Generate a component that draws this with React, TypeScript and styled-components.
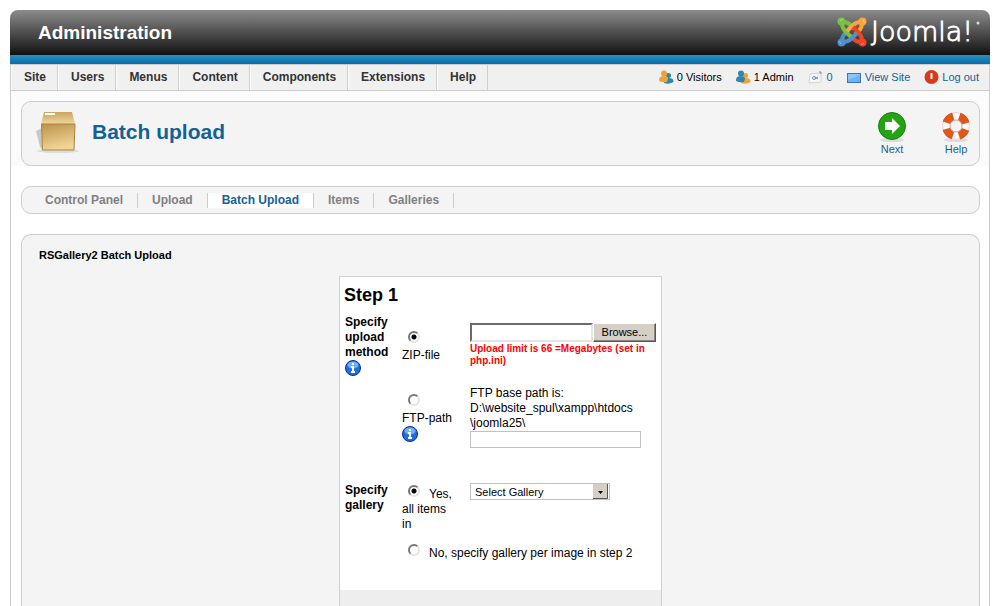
import React from 'react';
import styled, { createGlobalStyle } from 'styled-components';

const Global = createGlobalStyle`
  * { box-sizing: border-box; }
  html, body { margin: 0; padding: 0; background: #fff; }
  body, input, button, select { font-family: "Liberation Sans", Arial, sans-serif; }
  body { font-size: 12px; line-height: 15px; color: #000; }
  a { color: #146295; text-decoration: none; }
  h1, h2, h3, ul, fieldset { margin: 0; padding: 0; border: 0; }
  ul { list-style: none; }
`;

const Page = styled.div`
  padding: 10px 10px 0;
`;

const Header = styled.header`
  display: flex;
  align-items: center;
  justify-content: space-between;
  height: 45px;
  padding: 0 9px 0 28px;
  border-radius: 8px 8px 0 0;
  background: linear-gradient(#8c8c8c, #111);
`;

const SiteName = styled.h1`
  color: #fff;
  font-size: 19px;
  line-height: 24px;
`;

const Logo = styled.a`
  display: flex;
  height: 36px;
`;

const BlueStrip = styled.div`
  height: 9px;
  background: linear-gradient(#2490c8, #0a6ba3);
`;

const MenuBar = styled.div`
  display: flex;
  justify-content: space-between;
  height: 27px;
  border: 1px solid #ccc;
  background: #f0f0f0;
`;

const MenuList = styled.ul`
  display: flex;
`;

const MenuLink = styled.a`
  display: block;
  height: 25px;
  padding: 0 11px 0 12px;
  border-right: 1px solid #d0d0d0;
  border-left: 1px solid #fafafa;
  color: #333;
  font-weight: bold;
  line-height: 25px;
`;

const StatusList = styled.ul`
  display: flex;
  gap: 14px;
  padding-right: 10px;
  font-size: 11px;
  line-height: 25px;
`;

const StatusItem = styled.li`
  display: flex;
  align-items: center;
  gap: 3px;
`;

const Body = styled.main`
  padding: 0 9px 0 10px;
  border: solid #ccc;
  border-width: 0 1px;
  background: linear-gradient(#fbfbfb 75px, #fff 75px);
`;

const Panel = styled.section`
  border: 1px solid #ccc;
  border-radius: 10px;
  background: #f4f4f4;
`;

const TitleBar = styled(Panel)`
  display: flex;
  align-items: center;
  height: 65px;
  padding: 0 3px 4px 10px;
`;

const TitleSpacer = styled.div`
  padding-top: 10px;
`;

const PageTitle = styled.h2`
  flex: 1;
  padding-left: 12px;
  color: #146295;
  font-size: 21px;
  line-height: 26px;
`;

const Tools = styled.div`
  display: flex;
  gap: 24px;
`;

const ToolButton = styled.button`
  display: flex;
  flex-direction: column;
  align-items: center;
  width: 40px;
  padding: 4px 0 0;
  border: 0;
  background: none;
  color: #146295;
  font-size: 11px;
  line-height: 13px;
`;

const TabBar = styled(Panel).attrs({ as: 'nav' })`
  display: flex;
  align-items: center;
  height: 28px;
  margin: 20px 0;
  padding: 1px 0 0 8px;
`;

const TabLink = styled.a<{ $active?: boolean }>`
  padding: 0 14px;
  border-right: 1px solid #ccc;
  background: ${p => (p.$active ? '#fff' : 'transparent')};
  color: ${p => (p.$active ? '#146295' : '#808080')};
  font-weight: bold;

  &:first-child { padding-left: 15px; }
`;

const Content = styled(Panel)`
  padding: 12px 17px 0;
  border-bottom: 0;
  border-radius: 10px 10px 0 0;
`;

const ContentTitle = styled.h3`
  font-size: 11px;
  line-height: 16px;
`;

const StepForm = styled.form`
  width: 323px;
  margin: 13px auto 0;
  border: 1px solid #d0d0d0;
  border-bottom: 0;
  background: #fff;
`;

const StepTitle = styled.h3`
  padding: 7px 4px 9px;
  font-size: 18px;
  line-height: 22px;
`;

const Fields = styled.fieldset<{ $top?: number }>`
  display: grid;
  grid-template-columns: 57px 68px 1fr;
  padding-top: ${p => p.$top ?? 0}px;
  padding-left: 5px;
`;

const FieldName = styled.div`
  padding-right: 8px;
  font-weight: bold;
`;

const Choice = styled.div<{ $top?: number; $wide?: boolean }>`
  grid-column: ${p => (p.$wide ? '2 / 4' : '2')};
  padding-top: ${p => p.$top ?? 0}px;
  padding-right: ${p => (p.$wide ? 0 : 14)}px;
`;

const Value = styled.div<{ $top?: number }>`
  grid-column: 3;
  padding-top: ${p => p.$top ?? 0}px;
`;

const ChoiceText = styled.label<{ $block?: boolean }>`
  display: ${p => (p.$block ? 'block' : 'inline')};
`;

const Radio = styled.input.attrs({ type: 'radio' })`
  appearance: none;
  width: 12px;
  height: 12px;
  margin: 0 9px 0 6px;
  border: 2px solid;
  border-color: #777 #e4e4e4 #e4e4e4 #777;
  border-radius: 50%;
  background: #fff;
  vertical-align: 1px;

  &:checked {
    background: radial-gradient(circle, #000 2px, #fff 3px);
  }
`;

const FileRow = styled.div`
  display: flex;
`;

const FileBox = styled.input`
  width: 123px;
  height: 19px;
  border: 2px solid;
  border-color: #6b6b6b #e4e4e4 #e4e4e4 #6b6b6b;
  background: #fff;
`;

const BrowseButton = styled.button`
  width: 63px;
  height: 19px;
  padding: 0;
  border: 1px solid;
  border-color: #fff #555 #555 #fff;
  background: #d4d0c8;
  box-shadow: inset -1px -1px #8a8680;
  color: #000;
  font-size: 11px;
  line-height: 15px;
`;

const Warning = styled.p`
  margin: 1px 0 0;
  color: #f00;
  font-size: 10px;
  font-weight: bold;
  line-height: 12px;
`;

const PathBox = styled.input`
  display: block;
  width: 171px;
  height: 17px;
  border: 1px solid #c0c0c0;
`;

const SelectBox = styled.div`
  display: flex;
  align-items: center;
  width: 140px;
  height: 17px;
  padding-right: 1px;
  border: 1px solid #c0c0c0;
`;

const GallerySelect = styled.select`
  appearance: none;
  flex: 1;
  height: 15px;
  padding: 0 4px;
  border: 0;
  background: #fff;
  color: #000;
  font-size: 11px;
`;

const StepFooter = styled.div`
  height: 16px;
  margin-top: 29px;
  background: #eee;
`;

const Svg = styled.svg`
  display: block;
  flex: none;
`;

function JoomlaLogo() {
  const arms: Array<[string, number]> = [
    ['#7ac143', 0],
    ['#f9a541', 90],
    ['#f44321', 180],
    ['#5091cd', 270],
  ];
  return (
    <Svg width="144" height="36" viewBox="0 0 144 36" role="img" aria-label="Joomla!">
      <g transform="translate(0 2)">
        {arms.map(([color, turn]) => (
          <g key={color} transform={`rotate(${turn} 15 15)`} stroke={color} fill="none" strokeWidth="4">
            <path d="M6 5Q11 5 14 8.500L17 11.500" />
          </g>
        ))}
        {arms.map(([color, turn]) => (
          <g key={color} transform={`rotate(${turn} 15 15)`} stroke={color} fill="none" strokeWidth="4">
            <path d="M5 6Q5 11 8.500 14.500L14 20" />
            <circle cx="4.500" cy="4.500" r="4" fill={color} stroke="none" />
            <path d="M3 4Q4 2 6 3" stroke="#fff" strokeOpacity="0.4" strokeWidth="1" />
          </g>
        ))}
      </g>
      <text x="34" y="26" fill="#fff" stroke="#fff" strokeWidth="0.900" fontFamily="DejaVu Sans" fontWeight="200" fontSize="27">Joomla!</text>
      <circle cx="141" cy="8" r="1.500" fill="#ddd" />
    </Svg>
  );
}

function BoxIcon() {
  return (
    <Svg width="48" height="48" viewBox="0 0 48 48" aria-hidden="true">
      <defs>
        <linearGradient id="boxFront" x1="0" y1="0" x2="0.3" y2="1">
          <stop offset="0" stopColor="#ba924b" />
          <stop offset="1" stopColor="#f1d596" />
        </linearGradient>
        <linearGradient id="boxTop" x1="0" y1="0" x2="0" y2="1">
          <stop offset="0" stopColor="#c9a45c" />
          <stop offset="1" stopColor="#f0d79c" />
        </linearGradient>
      </defs>
      <ellipse cx="26" cy="43" rx="21" ry="2" fill="#dcdcdc" />
      <path d="M4 23L10 20V41L8 39Z" fill="#c8c8c8" />
      <path d="M12 4H40L43 16H9Z" fill="url(#boxTop)" />
      <path d="M9.500 16H43L42 42H10.500Z" fill="url(#boxFront)" stroke="#a98240" />
      <path d="M13 6H23" stroke="#fff" strokeWidth="2" />
    </Svg>
  );
}

function NextIcon() {
  return (
    <Svg width="32" height="32" viewBox="0 0 32 32" aria-hidden="true">
      <ellipse cx="16" cy="29" rx="12" ry="2" fill="#dcdcdc" />
      <circle cx="16" cy="15" r="13.500" fill="#24a313" stroke="#158018" />
      <path d="M9 11H16V7L24 15L16 23V19H9Z" fill="#fff" />
    </Svg>
  );
}

function HelpIcon() {
  return (
    <Svg width="32" height="32" viewBox="0 0 32 32" aria-hidden="true">
      <ellipse cx="16" cy="29" rx="12" ry="2" fill="#dcdcdc" />
      <g transform="rotate(45 16 15)">
        <circle cx="16" cy="15" r="10" fill="#f4f4f4" stroke="#f8f8f8" strokeWidth="8" />
        <circle cx="16" cy="15" r="10" fill="none" stroke="#e0571c" strokeWidth="8" strokeDasharray="9.708 6" strokeDashoffset="4.854" />
      </g>
      <circle cx="16" cy="15" r="6" fill="none" stroke="#c9a89c" />
      <circle cx="16" cy="15" r="13.500" fill="none" stroke="#b0410f" strokeOpacity="0.2" />
    </Svg>
  );
}

function UsersIcon({ left, right }: { left: string; right: string }) {
  return (
    <Svg width="15" height="16" viewBox="0 0 15 16" aria-hidden="true">
      <circle cx="9.500" cy="5.500" r="2.500" fill={right} />
      <path d="M5 13Q4 8 9.500 8Q15 8 14.500 12Q10 15 5 13Z" fill={right} />
      <circle cx="5" cy="3.500" r="3" fill={left} />
      <path d="M0 10Q0 6 5 6Q9 6 9 9L8 12Q4 13 0 11Z" fill={left} />
    </Svg>
  );
}

function MailIcon() {
  return (
    <Svg width="16" height="16" viewBox="0 0 16 16" aria-hidden="true">
      <path d="M2 4L13 3L13 12L1 13Z" fill="#f8f8f8" stroke="#d4d4d4" />
      <circle cx="6" cy="8" r="1.500" fill="none" stroke="#6c8fa8" />
      <path d="M7 7L10 9M7 9L10 7M11 2H13V4" fill="none" stroke="#6c8fa8" />
    </Svg>
  );
}

function ScreenIcon() {
  return (
    <Svg width="15" height="16" viewBox="0 0 15 16" aria-hidden="true">
      <rect x="0.500" y="3.500" width="13" height="9" fill="#6cb2f4" stroke="#3d74b8" />
      <path d="M1 10L13 5V4H1Z" fill="#8cc6fb" />
    </Svg>
  );
}

function PowerIcon() {
  return (
    <Svg width="15" height="16" viewBox="0 0 15 16" aria-hidden="true">
      <circle cx="7.500" cy="7" r="7" fill="#d93a17" />
      <path d="M7.500 3V9" stroke="#fff" strokeWidth="2" />
    </Svg>
  );
}

function InfoIcon() {
  return (
    <Svg width="16" height="16" viewBox="0 0 16 16" role="img" aria-label="Information">
      <circle cx="8" cy="8" r="7.500" fill="#1d6fe0" stroke="#0a2a8c" />
      <ellipse cx="8" cy="5" rx="5.500" ry="3.500" fill="#6fb0f8" />
      <path d="M7 4H9M6 7H8V12M6 12H10" stroke="#fff" strokeWidth="2" fill="none" />
    </Svg>
  );
}

function ArrowIcon() {
  return (
    <Svg width="15" height="15" viewBox="0 0 15 15" aria-hidden="true">
      <path d="M0 0H15V15H0Z" fill="#d4d0c8" />
      <path d="M14.500 0V14.500H0" fill="none" stroke="#555" />
      <path d="M5 7H10L7.500 10Z" fill="#000" />
    </Svg>
  );
}

const menus = ['Site', 'Users', 'Menus', 'Content', 'Components', 'Extensions', 'Help'];
const tabs = ['Control Panel', 'Upload', 'Batch Upload', 'Items', 'Galleries'];

export default function App() {
  return (
    <>
      <Global />
      <Page>
        <Header>
          <SiteName>Administration</SiteName>
          <Logo href="#joomla"><JoomlaLogo /></Logo>
        </Header>
        <BlueStrip />
        <MenuBar>
          <MenuList>
            {menus.map(name => (
              <li key={name}><MenuLink href="#menu">{name}</MenuLink></li>
            ))}
          </MenuList>
          <StatusList>
            <StatusItem><UsersIcon left="#f2a233" right="#2f87ad" />0 Visitors</StatusItem>
            <StatusItem><UsersIcon left="#2f87ad" right="#f2a233" />1 Admin</StatusItem>
            <StatusItem><MailIcon /><a href="#messages">0</a></StatusItem>
            <StatusItem><ScreenIcon /><a href="#site">View Site</a></StatusItem>
            <StatusItem><PowerIcon /><a href="#logout">Log out</a></StatusItem>
          </StatusList>
        </MenuBar>
        <Body>
          <TitleSpacer>
            <TitleBar>
              <BoxIcon />
              <PageTitle>Batch upload</PageTitle>
              <Tools>
                <ToolButton type="button"><NextIcon />Next</ToolButton>
                <ToolButton type="button"><HelpIcon />Help</ToolButton>
              </Tools>
            </TitleBar>
          </TitleSpacer>
          <TabBar>
            {tabs.map(name => (
              <TabLink key={name} href="#tab" $active={name === 'Batch Upload'}>{name}</TabLink>
            ))}
          </TabBar>
          <Content>
            <ContentTitle>RSGallery2 Batch Upload</ContentTitle>
            <StepForm>
              <StepTitle>Step 1</StepTitle>
              <Fields>
                <FieldName>Specify upload method<InfoIcon /></FieldName>
                <Choice $top={16}>
                  <Radio id="zip" name="method" defaultChecked />
                  <ChoiceText htmlFor="zip" $block>ZIP-file</ChoiceText>
                </Choice>
                <Value $top={8}>
                  <FileRow>
                    <FileBox type="text" aria-label="ZIP-file" />
                    <BrowseButton type="button">Browse...</BrowseButton>
                  </FileRow>
                  <Warning>Upload limit is 66 =Megabytes (set in php.ini)</Warning>
                </Value>
                <Choice $top={18}>
                  <Radio id="ftp" name="method" />
                  <ChoiceText htmlFor="ftp" $block>FTP-path</ChoiceText>
                  <InfoIcon />
                </Choice>
                <Value $top={10}>
                  <label htmlFor="path">FTP base path is:<br />D:\website_spul\xampp\htdocs<br />\joomla25\</label>
                  <PathBox id="path" type="text" />
                </Value>
              </Fields>
              <Fields $top={35}>
                <FieldName>Specify gallery</FieldName>
                <Choice $top={2}>
                  <Radio id="all" name="gallery" defaultChecked />
                  <ChoiceText htmlFor="all">Yes, all items in</ChoiceText>
                </Choice>
                <Value>
                  <SelectBox>
                    <GallerySelect aria-label="Gallery">
                      <option>Select Gallery</option>
                    </GallerySelect>
                    <ArrowIcon />
                  </SelectBox>
                </Value>
                <Choice $top={12} $wide>
                  <Radio id="each" name="gallery" />
                  <ChoiceText htmlFor="each">No, specify gallery per image in step 2</ChoiceText>
                </Choice>
              </Fields>
              <StepFooter />
            </StepForm>
          </Content>
        </Body>
      </Page>
    </>
  );
}
